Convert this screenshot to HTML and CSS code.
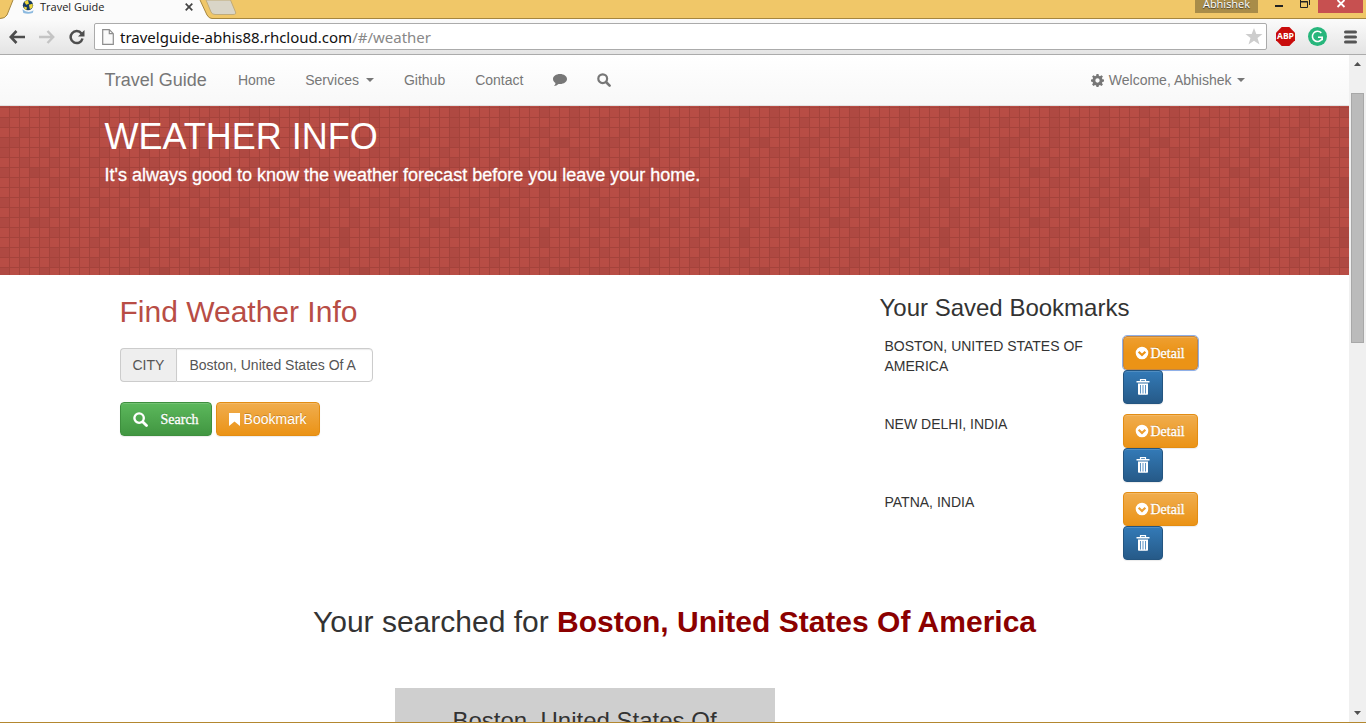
FILE: index.html
```html
<!DOCTYPE html>
<html lang="en">
<head>
<meta charset="utf-8">
<title>Travel Guide</title>
<link rel="stylesheet" href="styles.css">
</head>
<body>
<svg class="defs" aria-hidden="true">
  <symbol id="i-search" viewBox="0 0 14 14"><circle cx="5.7" cy="5.7" r="4.4" fill="none" stroke="currentColor" stroke-width="2.200"/><path d="M9 9l3.600 3.600" stroke="currentColor" stroke-width="2.600" stroke-linecap="round"/></symbol>
  <symbol id="i-detail" viewBox="0 0 14 14"><path fill="currentColor" fill-rule="evenodd" d="M7 .7a6.300 6.300 0 1 0 0 12.600a6.300 6.300 0 0 0 0-12.600zM7 10.600L2.900 6.400l1.500-1.500L7 7.500l2.600-2.600 1.500 1.500z"/></symbol>
  <symbol id="i-trash" viewBox="0 0 14 16"><path d="M4.500 2.500V.7h5v1.800" fill="none" stroke="currentColor" stroke-width="1.200"/><path d="M.5 2h13v1.500H.5z" fill="currentColor"/><path fill="currentColor" d="M2 4.500h10V15q0 .8-.8.8H2.800Q2 15.800 2 15z"/><path d="M4.500 6v8.500M7 6v8.500M9.500 6v8.500" stroke="#5c93c4"/></symbol>
</svg>
<div class="browser">
  <header class="titlebar">
    <div class="tab">
      <svg class="tab-shape" viewBox="0 0 212 20"><path d="M0 20V18.500Q5 18.500 7 15L13 0H200L207 15Q209 18.500 212 18.500V20z" fill="#fbfbfb"/><path d="M0 18.500Q5 18.500 7 15L13 0M200 0L207 15Q209 18.500 212 18.500" fill="none" stroke="#a5863f"/></svg>
      <svg class="favicon" viewBox="0 0 14 15"><path d="M1 10q6 5 12 1l-1 3q-5 1.500-10 0z" fill="#8bb9df"/><circle cx="7" cy="5.500" r="5.500" fill="#173a63"/><path d="M3 2l4-2 1 4-3 1zM8 5l4-1v4l-3 2zM3 7l3 1-1 3-2-2z" fill="#f0d83a"/></svg>
      <span class="tab-title">Travel Guide</span>
      <button class="tab-close" aria-label="Close tab"><svg width="8" height="8" viewBox="0 0 8 8"><path d="M.7.7l6.600 6.600M7.300.7L.7 7.300" stroke="#444" stroke-width="1.700"/></svg></button>
    </div>
    <button class="new-tab" aria-label="New tab"><svg width="34" height="16" viewBox="0 0 34 16"><path d="M1 0l5 12q1 2.500 4 2.500h18q3.500 0 2.500-2.500L25.500 0z" fill="#d9d5c7" stroke="#c0ab79"/></svg></button>
    <div class="window-tools">
      <span class="profile">Abhishek</span>
      <button class="win" aria-label="Minimize"><svg width="10" height="8" viewBox="0 0 10 8"><path d="M1 6h8" stroke="#222" stroke-width="2"/></svg></button>
      <button class="win" aria-label="Restore"><svg width="10" height="8" viewBox="0 0 10 8"><path d="M.5 0v7.500h7V1.500H.5M0 2h8M9.500 0v5" fill="none" stroke="#222"/></svg></button>
      <button class="win win-close" aria-label="Close window"><svg width="10" height="8" viewBox="0 0 10 8"><path d="M1.500 0l7 7M8.500 0l-7 7" stroke="#fff" stroke-width="1.800"/></svg></button>
    </div>
  </header>
  <div class="toolbar">
    <button aria-label="Back"><svg width="16" height="14" viewBox="0 0 16 14"><path d="M7.500 1L1.800 7l5.700 6M2 7h14" fill="none" stroke="#4d4d4d" stroke-width="2.600"/></svg></button>
    <button aria-label="Forward"><svg width="16" height="14" viewBox="0 0 16 14"><path d="M8.500 1l5.700 6-5.700 6M14 7H0" fill="none" stroke="#c4c4c4" stroke-width="2.400"/></svg></button>
    <button aria-label="Reload"><svg width="16" height="16" viewBox="0 0 16 16"><path d="M12.500 4.500a6 6 0 1 0 1 5" fill="none" stroke="#4d4d4d" stroke-width="2.500"/><path d="M15.500 1v6.500H9z" fill="#4d4d4d"/></svg></button>
    <div class="address">
      <svg width="12" height="16" viewBox="0 0 12 16"><path d="M.7.7h6.600l4 4v10.600H.7zM7.300.7v4h4" fill="#fafafa" stroke="#8d8d8d" stroke-width="1.200"/></svg>
      <span class="url">travelguide-abhis88.rhcloud.com<span class="path">/#/weather</span></span>
      <svg width="18" height="17" viewBox="0 0 18 17"><path d="M9 0l2.300 6H17.500l-5 3.900 2 6.600L9 12.700l-5.500 3.800 2-6.600-5-3.900h6.200z" fill="#cdcdcd"/></svg>
    </div>
    <div class="extensions">
      <svg width="19" height="19" viewBox="0 0 20 20"><path d="M6 0h8l6 6v8l-6 6H6l-6-6V6z" fill="#c90c0c"/><text x="10" y="13" text-anchor="middle" class="abp">ABP</text></svg>
      <svg width="19" height="19" viewBox="0 0 20 20"><circle cx="10" cy="10" r="10" fill="#27b67c"/><path d="M14 6.200A5.400 5.400 0 1 0 15 12M10.500 10.700H15V14" fill="none" stroke="#fff" stroke-width="1.600"/></svg>
      <svg width="17" height="14" viewBox="0 0 17 14"><path d="M5.500 2h10M5.500 7h10M5.500 12h10" stroke="#555" stroke-width="3" stroke-linecap="round"/></svg>
    </div>
  </div>
  <div class="window">
    <div class="page">
      <nav class="navbar">
        <div class="container nav-row">
          <a class="brand" href="#">Travel Guide</a>
          <a href="#">Home</a>
          <a href="#">Services <i class="caret"></i></a>
          <a href="#">Github</a>
          <a href="#">Contact</a>
          <a href="#" aria-label="Comments"><svg width="14" height="12" viewBox="0 0 14 12"><path d="M7 0c4 0 7 2.200 7 5s-3 5-7 5q-.8 0-1.500-.1Q3.500 11.700 1 12q1.500-1.500 1.500-3C1 8 0 6.600 0 5c0-2.800 3-5 7-5z" fill="currentColor"/></svg></a>
          <a href="#" aria-label="Search"><svg width="14" height="14"><use href="#i-search"/></svg></a>
          <a class="user" href="#"><svg width="13" height="13" viewBox="0 0 12 12"><path fill="currentColor" fill-rule="evenodd" d="M5.100 0h1.800l.4 1.600 1 .4 1.400-.9 1.300 1.300-.9 1.400.4 1 1.500.3v1.800l-1.500.4-.4 1 .9 1.400-1.300 1.300-1.400-.9-1 .4L6.900 12H5.100l-.4-1.500-1-.4-1.400.9L1 9.700l.9-1.400-.4-1L0 6.900V5.100l1.500-.3.4-1L1 2.400l1.300-1.300 1.400.9 1-.4zM6 4a2 2 0 1 0 0 4a2 2 0 0 0 0-4z"/></svg> Welcome, Abhishek <i class="caret"></i></a>
        </div>
      </nav>
      <section class="banner">
        <svg class="mosaic" aria-hidden="true">
          <defs>
            <pattern id="tiles" x="120" y="2" width="200" height="170" patternUnits="userSpaceOnUse">
              <rect width="200" height="170" fill="#b84d45"/>
              <g fill="none" stroke="#af4942" stroke-width="10">
                <path d="M20 5h10m20 0h10m70 0h10m40 0h10M50 15h10m20 0h10m40 0h10m10 0h10m20 0h10M20 25h10m70 0h10m20 0h10m30 0h10M0 35h10m20 0h20m30 0h20m30 0h10"/>
                <path d="M20 45h10m20 0h10m20 0h10m30 0h10m20 0h10m20 0h10M0 55h10m20 0h10m30 0h10m20 0h10m20 0h10m30 0h10M0 65h10m20 0h10m30 0h20m20 0h20m20 0h10M20 75h10m20 0h10m70 0h10m40 0h10"/>
                <path d="M0 85h10m10 0h10m40 0h10m20 0h10m60 0h10M20 95h10m20 0h10m20 0h10m30 0h10m20 0h10m20 0h10M0 105h10m20 0h10m30 0h10m20 0h10m20 0h10m30 0h10M0 115h10m20 0h10m30 0h20m20 0h20m20 0h10"/>
                <path d="M20 125h10m20 0h10m70 0h10m40 0h10M0 135h10m10 0h10m40 0h10m20 0h10m60 0h10M50 145h10m20 0h10m40 0h10m10 0h10m20 0h10M20 155h10m70 0h10m20 0h10m30 0h10M0 165h10m20 0h20m20 0h20m30 0h10"/>
              </g>
              <path d="M30 15h10M10 25h10m40 0h10m120 0h10M150 35h10M60 45h10M90 5h10M90 75h10m40 0h10M120 85h10M60 95h10m120 0h10M90 105h10M90 125h10m40 0h10M120 135h10M30 145h10M10 155h10m40 0h10" fill="none" stroke="#b44b43" stroke-width="10"/>
              <path d="M40 35h10M110 65h10M20 75h10M20 85h10M110 115h10M20 125h10M20 135h10M40 165h10" fill="none" stroke="#ab4740" stroke-width="10"/>
            </pattern>
            <pattern id="grout" y="2" width="10" height="10" patternUnits="userSpaceOnUse">
              <path d="M9.500 0v10M0 9.500h10" stroke="#a4433b" fill="none"/>
            </pattern>
          </defs>
          <rect width="100%" height="100%" fill="url(#tiles)"/>
          <rect width="100%" height="100%" fill="url(#grout)"/>
        </svg>
        <div class="container banner-text">
          <h1>WEATHER INFO</h1>
          <p>It's always good to know the weather forecast before you leave your home.</p>
        </div>
      </section>
      <main class="container">
        <div class="columns">
          <form class="finder">
            <h2>Find Weather Info</h2>
            <div class="group"><label for="city">CITY</label><input id="city" type="text" value="Boston, United States Of A"></div>
            <div class="actions">
              <button type="button" class="btn green serif"><svg width="15" height="15"><use href="#i-search"/></svg><span>Search</span></button>
              <button type="button" class="btn orange"><svg width="11" height="13" viewBox="0 0 11 13"><path d="M0 0h11v13L5.500 8.500 0 13z" fill="currentColor"/></svg>Bookmark</button>
            </div>
          </form>
          <section class="saved">
            <h3>Your Saved Bookmarks</h3>
            <table>
              <tr><td>BOSTON, UNITED STATES OF AMERICA</td><td><div class="stack"><button class="btn orange serif focused"><svg width="14" height="14"><use href="#i-detail"/></svg><span>Detail</span></button><button class="btn blue" aria-label="Delete Boston"><svg width="14" height="16"><use href="#i-trash"/></svg></button></div></td></tr>
              <tr><td>NEW DELHI, INDIA</td><td><div class="stack"><button class="btn orange serif"><svg width="14" height="14"><use href="#i-detail"/></svg><span>Detail</span></button><button class="btn blue" aria-label="Delete New Delhi"><svg width="14" height="16"><use href="#i-trash"/></svg></button></div></td></tr>
              <tr><td>PATNA, INDIA</td><td><div class="stack"><button class="btn orange serif"><svg width="14" height="14"><use href="#i-detail"/></svg><span>Detail</span></button><button class="btn blue" aria-label="Delete Patna"><svg width="14" height="16"><use href="#i-trash"/></svg></button></div></td></tr>
            </table>
          </section>
        </div>
        <h2 class="result">Your searched for <strong>Boston, United States Of America</strong></h2>
        <article class="card"><h3>Boston, United States Of America</h3></article>
      </main>
    </div>
    <div class="scrollbar" aria-hidden="true">
      <svg width="7" height="4" viewBox="0 0 7 4"><path d="M0 4l3.500-4L7 4z" fill="#505050"/></svg>
      <div class="track"><div class="thumb"></div></div>
      <svg width="7" height="4" viewBox="0 0 7 4"><path d="M0 0h7L3.500 4z" fill="#505050"/></svg>
    </div>
  </div>
</div>
</body>
</html>
```

FILE: styles.css
```css
* { box-sizing: border-box; }
body {
  margin: 0;
  font: 14px/20px "Liberation Sans", Arial, sans-serif;
  color: #333;
  background: #fff;
}
h1, h2, h3, p { margin: 0; font-weight: 400; }
button { margin: 0; padding: 0; border: 0; background: none; font: inherit; }
svg { flex: none; }
.defs { position: absolute; width: 0; height: 0; }

.browser {
  display: flex;
  flex-direction: column;
  height: 100vh;
  overflow: hidden;
  border-bottom: 1px solid #b3872f;
}
.titlebar {
  display: flex;
  flex: none;
  height: 19px;
  background: #f0c768;
  border-bottom: 1px solid #a5863f;
}
.tab {
  position: relative;
  display: flex;
  align-items: flex-start;
  width: 212px;
  height: 19px;
  padding: 0 18px 0 21px;
}
.tab-shape { position: absolute; left: 0; top: 0; width: 212px; height: 20px; }
.favicon { position: relative; width: 14px; height: 14px; margin-right: 5px; }
.tab-title {
  position: relative;
  flex: 1;
  font: 11px/14px "Open Sans", sans-serif;
  color: #222;
}
.tab-close { position: relative; display: flex; padding: 3px 1px; }
.new-tab { display: flex; align-self: flex-start; margin-left: -7px; position: relative; }
.window-tools { display: flex; align-items: flex-start; margin-left: auto; padding-right: 3px; }
.profile {
  width: 63px;
  height: 13px;
  margin-right: 8px;
  background: #a88c49;
  color: #fff;
  font: 11px/7px "Open Sans", sans-serif;
  text-align: center;
  text-shadow: 0 1px 1px #333;
}
.win { display: flex; justify-content: center; width: 26px; }
.win-close { width: 45px; height: 13px; background: #c75050; }

.toolbar {
  display: flex;
  flex: none;
  align-items: center;
  gap: 14px;
  height: 36px;
  padding: 0 9px 0 9px;
  background: linear-gradient(#fbfbfb, #e4e4e4);
  border-bottom: 1px solid #ababab;
}
.toolbar button { display: flex; }
.toolbar .address {
  display: flex;
  flex: 1;
  align-items: center;
  gap: 6px;
  height: 27px;
  margin-left: -5px;
  padding: 0 3px 0 7px;
  background: #fff;
  border: 1px solid #ababab;
  border-radius: 2px;
}
.url { flex: 1; font: 15px/24px "Noto Sans", sans-serif; color: #111; }
.path { color: #888; }
.extensions { display: flex; align-items: center; gap: 13px; margin-left: -5px; }
.abp { font: 700 9px "Open Sans", sans-serif; fill: #fff; }

.window { display: flex; flex: 1; min-height: 0; }
.page { flex: 1; min-width: 0; overflow: hidden; }
.container { width: 100%; max-width: 1170px; margin: 0 auto; padding: 0 15px; }

.navbar {
  height: 51px;
  background: linear-gradient(#fff, #f8f8f8);
  border-bottom: 1px solid #e2e2e2;
}
.nav-row { display: flex; align-items: center; }
.navbar a {
  display: flex;
  align-items: center;
  gap: 7px;
  height: 50px;
  padding: 0 15px;
  color: #777;
  text-decoration: none;
}
.navbar .brand { padding: 0 16px 0 0; font-size: 18px; }
.navbar .user { gap: 5px; margin-left: auto; padding-right: 0; }
.caret { border-top: 4px solid; border-left: 4px solid transparent; border-right: 4px solid transparent; }

.banner { position: relative; height: 169px; color: #fff; box-shadow: inset 0 1px 2px #8f3933; }
.mosaic { position: absolute; inset: 0; width: 100%; height: 100%; }
.banner-text { position: relative; padding-top: 11px; }
h1 { font-size: 36px; line-height: 40px; }
.banner p { margin-top: 8px; font-size: 18px; line-height: 20px; -webkit-text-stroke: 0.3px #fff; }

.columns { display: flex; justify-content: space-between; padding: 20px 0 40px; }
.finder, .saved { width: 380px; padding: 0 15px; }
h2 { font-size: 30px; line-height: 33px; }
h3 { font-size: 24px; line-height: 26px; }
.finder h2 { color: #b84d45; }
.group { display: flex; width: 253px; height: 34px; margin: 20px 0; }
.group label {
  padding: 6px 12px;
  background: #eee;
  border: 1px solid #ccc;
  border-right: 0;
  border-radius: 4px 0 0 4px;
  color: #555;
}
.group input {
  flex: 1;
  min-width: 0;
  padding: 6px 12px;
  border: 1px solid #ccc;
  border-radius: 0 4px 4px 0;
  box-shadow: inset 0 1px 1px #ececec;
  color: #555;
  font: inherit;
}
.actions { display: flex; gap: 4px; }
.btn {
  display: flex;
  align-items: center;
  gap: 4px;
  height: 34px;
  padding: 0 12px;
  border: 1px solid;
  border-radius: 4px;
  color: #fff;
  text-shadow: 0 -1px 0 rgba(0, 0, 0, .2);
  box-shadow: inset 0 1px 0 rgba(255, 255, 255, .15), 0 1px 1px rgba(0, 0, 0, .08);
}
.serif { font-family: "Liberation Serif", "Times New Roman", serif; -webkit-text-stroke: 0.3px #fff; }
.serif span { padding-top: 2px; }
.green { gap: 13px; background: linear-gradient(#5cb85c, #419641); border-color: #3e8f3e; }
.orange { background: linear-gradient(#f0ad4e, #eb9316); border-color: #e38d13; }
.saved .orange { gap: 2px; padding: 0 12px 0 11px; }
.blue { background: linear-gradient(#337ab7, #265a88); border-color: #245580; }
.saved .focused { background: linear-gradient(#ee9f31, #eb9316 50%); outline: 1px solid #8fb0e8; border-color: #c48640; }

.saved table { width: 100%; margin-top: 10px; border-collapse: collapse; }
.saved td { padding: 5px; vertical-align: top; }
.saved td:first-child { width: 68%; padding-right: 20px; }
.stack { display: flex; flex-direction: column; align-items: flex-start; }

.result { text-align: center; }
.result strong { color: #8b0000; }
.card {
  width: 380px;
  margin: 50px 0 0 290px;
  padding: 20px 50px;
  background: #cfcfcf;
  text-align: center;
}

.scrollbar {
  display: flex;
  flex: none;
  flex-direction: column;
  align-items: center;
  width: 17px;
  padding: 7px 0;
  background: #f0f0f0;
}
.track { flex: 1; width: 13px; padding-top: 27px; }
.thumb { height: 250px; background: #bbb; border: 1px solid #a8a8a8; }
```
